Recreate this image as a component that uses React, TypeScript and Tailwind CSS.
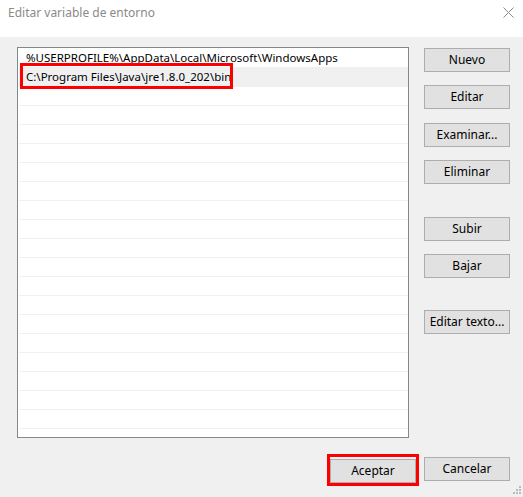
import React from 'react';

const paths = [
  '%USERPROFILE%\\AppData\\Local\\Microsoft\\WindowsApps',
  'C:\\Program Files\\Java\\jre1.8.0_202\\bin',
];

const TOTAL_ROWS = 20;

function DlgButton({ label, className = '' }: { label: string; className?: string }) {
  return (
    <button
      className={`w-[86px] h-[24px] bg-[#e1e1e1] border border-[#adadad] text-[12px] leading-none text-black ${className}`}
    >
      {label}
    </button>
  );
}

export default function App() {
  const rows = Array.from({ length: TOTAL_ROWS }, (_, i) => paths[i] ?? '');

  return (
    <div
      className="relative w-[523px] h-[497px] bg-[#f0f0f0] overflow-hidden select-none"
      style={{ fontFamily: '"Noto Sans", "Segoe UI", sans-serif' }}
    >
      {/* Title bar */}
      <div className="h-[37px] bg-white flex items-center justify-between pl-[8px] pr-[9px]">
        <span className="text-[12px] text-[#8a8a8a] -mt-[12px]">Editar variable de entorno</span>
        <svg width="11" height="11" viewBox="0 0 11 11" className="-mt-[12px]">
          <path d="M0.5 0.5 L10.5 10.5 M10.5 0.5 L0.5 10.5" stroke="#8a8a8a" strokeWidth="1" />
        </svg>
      </div>

      <div className="flex pl-[17px] pt-[10px]">
        {/* Path list */}
        <div className="w-[392px] h-[391px] bg-white border border-[#828790] pt-[1px] pl-[1px]">
          {rows.map((text, i) => (
            <div
              key={i}
              className={`relative h-[19px] border-b border-[#f0f0f0] flex items-center pl-[7px] text-[11.5px] text-black whitespace-nowrap ${
                i === 1 ? 'bg-[#f0f0f0]' : ''
              }`}
            >
              {text}
              {i === 1 && (
                <div className="absolute left-[1px] top-[-5px] w-[213px] h-[26px] border-[3px] border-[#ff0000] pointer-events-none" />
              )}
            </div>
          ))}
        </div>

        {/* Side buttons */}
        <div className="flex flex-col ml-[15px] pt-[1px]">
          <DlgButton label="Nuevo" />
          <DlgButton label="Editar" className="mt-[13px]" />
          <DlgButton label="Examinar..." className="mt-[14px]" />
          <DlgButton label="Eliminar" className="mt-[13px]" />
          <DlgButton label="Subir" className="mt-[33px]" />
          <DlgButton label="Bajar" className="mt-[13px]" />
          <DlgButton label="Editar texto..." className="mt-[32px]" />
        </div>
      </div>

      {/* OK / Cancel */}
      <div className="flex justify-end gap-[8px] pr-[13px] mt-[19px]">
        <div className="relative">
          <DlgButton label="Aceptar" />
          <div className="absolute -inset-[3px] border-[3px] border-[#ff0000] pointer-events-none" />
        </div>
        <DlgButton label="Cancelar" />
      </div>

      {/* Resize grip */}
      <svg width="10" height="10" viewBox="0 0 10 10" className="absolute right-[1px] bottom-[2px]">
        <rect x="7" y="1" width="2" height="2" fill="#bcbcbc" />
        <rect x="4" y="4" width="2" height="2" fill="#bcbcbc" />
        <rect x="7" y="4" width="2" height="2" fill="#bcbcbc" />
        <rect x="1" y="7" width="2" height="2" fill="#bcbcbc" />
        <rect x="4" y="7" width="2" height="2" fill="#bcbcbc" />
        <rect x="7" y="7" width="2" height="2" fill="#bcbcbc" />
      </svg>
    </div>
  );
}
